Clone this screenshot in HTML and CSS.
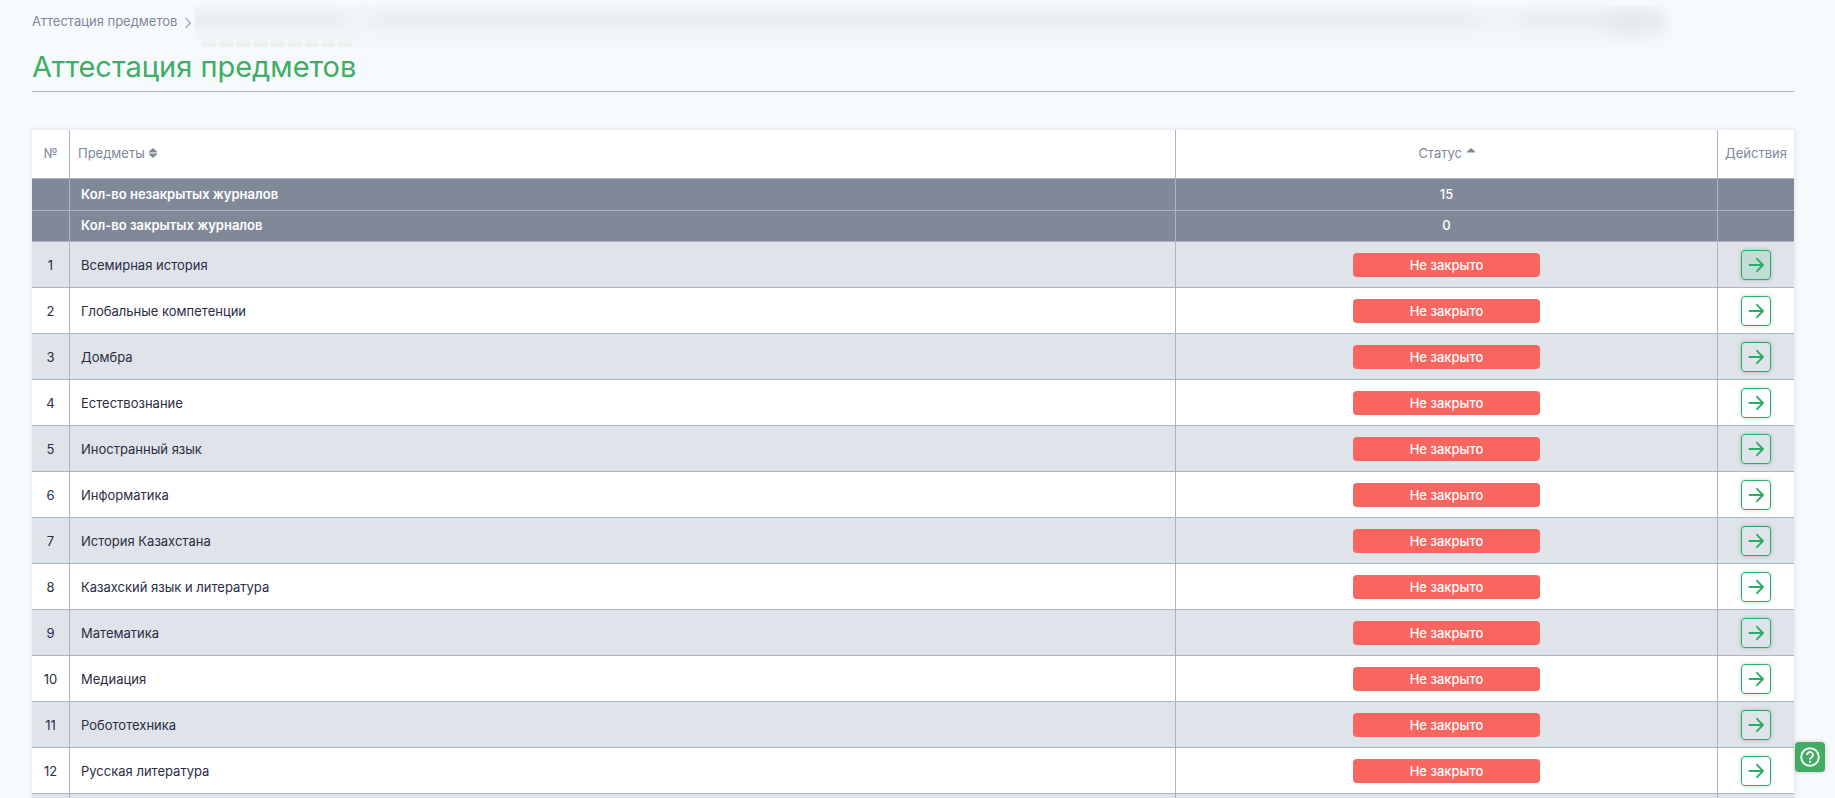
FILE: index.html
```
<!DOCTYPE html>
<html lang="ru">
<head>
    <meta charset="UTF-8">
    <title>Аттестация предметов</title>
    <link rel="stylesheet" href="styles.css">
</head>
<body>

<svg class="sprite" aria-hidden="true">
    <symbol id="arrow" viewBox="0 0 20 20">
        <path d="M3.500 10h13.500M11 3.800l6 6.200-6 6.200" fill="none" stroke="currentColor" stroke-width="1.900" stroke-linecap="round" stroke-linejoin="round"/>
    </symbol>
</svg>

<main class="page">
    <nav class="breadcrumb">
        <a href="#">Аттестация предметов</a>
        <svg class="chevron" viewBox="0 0 6 12"><path d="M.6 1l4.800 5-4.800 5" fill="none" stroke="#9fb3c8" stroke-width="1.400"/></svg>
        <div class="hidden-path"><div class="hidden-title"></div></div>
    </nav>
    <h1 class="title">Аттестация предметов</h1>

    <table class="journal">
        <colgroup>
            <col class="col-num">
            <col>
            <col class="col-status">
            <col class="col-action">
        </colgroup>
        <thead>
        <tr>
            <th>№</th>
            <th class="name">Предметы
                <svg class="sort" viewBox="0 0 8 10"><path d="M4 0l4 3.500v.9H0v-.9zM4 10l4-3.500v-.9H0v.9z" fill="currentColor"/></svg>
            </th>
            <th>Статус
                <svg class="sort" viewBox="0 0 8 10"><path d="M4 0l4 3.500v.9H0v-.9z" fill="currentColor"/></svg>
            </th>
            <th>Действия</th>
        </tr>
        </thead>
        <tbody class="totals">
        <tr><td></td><td class="name">Кол-во незакрытых журналов</td><td>15</td><td></td></tr>
        <tr><td></td><td class="name">Кол-во закрытых журналов</td><td>0</td><td></td></tr>
        </tbody>
        <tbody id="rows" class="rows"></tbody>
    </table>
</main>

<button class="help" type="button" aria-label="Помощь">
    <svg viewBox="0 0 20 20" fill="none" stroke="#fff" stroke-width="1.900">
        <circle cx="10" cy="10" r="8.800"/>
        <path d="M7.100 8a2.900 2.900 0 1 1 4.600 2.200c-1.100.7-1.700 1.100-1.700 2.300"/>
        <path d="M10 13.800v2"/>
    </svg>
</button>

<script src="script.js"></script>
</body>
</html>
```
FILE: styles.css
```
* {
    box-sizing: border-box;
}

body {
    margin: 0;
    background: #f7fafd;
    color: #2a2d43;
    font-family: Inter, "Noto Sans", sans-serif;
    font-size: 13px;
    line-height: 20px;
}

.sprite {
    display: none;
}

.page {
    height: 100vh;
    overflow-y: auto;
    scrollbar-width: none;
    padding: 5px 41px 0 32px;
}

.breadcrumb {
    display: flex;
    height: 42px;
    line-height: 32px;
}

.breadcrumb a {
    color: #7f879a;
    text-decoration: none;
    white-space: nowrap;
}

.chevron {
    flex: none;
    width: 6px;
    height: 12px;
    margin: 12px 4px 0 8px;
}

/* размытая часть пути */
.hidden-path {
    flex: none;
    display: flex;
    align-items: flex-end;
    width: 84%;
    background:
        linear-gradient(90deg, transparent 99%, #f7fafd),
        radial-gradient(ellipse 40px 24px at 97% 40%, #e5e8ee, transparent),
        radial-gradient(ellipse 30px 30px at 88% 42%, #f4f7fa, transparent),
        radial-gradient(ellipse 20px 30px at 11% 40%, #f3f6f9, transparent),
        linear-gradient(#f4f7fa, #ebeef1 40%, #f3f6f9 70%, #f6f9fc);
}

.hidden-title {
    width: 152px;
    height: 12px;
    margin-left: 8px;
    background:
        linear-gradient(#f3f6f9, transparent),
        repeating-linear-gradient(90deg, #e8f2ee 0 13px, #f5f9fb 13px 17px);
}

.title {
    margin: 0 0 38px;
    height: 45px;
    border-bottom: 1px solid #abb3c3;
    color: #41ad62;
    font-size: 29px;
    font-weight: 400;
    line-height: 40px;
}

.journal {
    width: 100%;
    table-layout: fixed;
    border-spacing: 0;
    background: #fff;
    box-shadow: 0 0 6px rgba(100, 130, 150, .2);
    text-align: center;
}

.col-num {
    width: 38px;
}

.col-status {
    width: 542px;
}

.col-action {
    width: 76px;
}

.journal th,
.journal td {
    padding: 0;
    border-right: 1px solid #abb3c3;
    border-bottom: 1px solid #abb3c3;
}

.journal th:last-child,
.journal td:last-child {
    border-right: 0;
}

.journal th {
    height: 49px;
    padding-bottom: 2px;
    color: #7f879a;
    font-weight: 400;
}

.journal th.name {
    padding-left: 8px;
    text-align: left;
}

.journal td.name {
    padding-left: 11px;
    text-align: left;
}

.sort {
    width: 8px;
    height: 10px;
    margin-left: 1px;
}

.totals td {
    height: 32px;
    padding-bottom: 2px;
    background: #818999;
    color: #fff;
    font-weight: 500;
}

.totals tr:last-child td {
    height: 31px;
}

.totals td.name {
    font-weight: 600;
}

.rows td {
    height: 46px;
}

.rows tr:nth-child(odd) {
    background: #dfe3ea;
}

.badge {
    display: block;
    width: 187px;
    margin: 0 auto;
    border-radius: 4px;
    background: #f8665f;
    color: #fff;
    font-weight: 500;
    line-height: 24px;
}

.open {
    display: block;
    width: 30px;
    height: 30px;
    margin: 0 auto;
    padding: 4px;
    border: 1px solid #2bac63;
    border-radius: 4px;
    background: transparent;
    box-shadow: 0 0 4px rgba(0, 0, 0, .2);
    color: #2bac63;
}

.open svg {
    display: block;
    width: 20px;
    height: 20px;
}

.open.active {
    background: #c3dcd5;
}

.help {
    position: fixed;
    right: 10px;
    bottom: 26px;
    width: 30px;
    height: 30px;
    padding: 5px;
    border: 0;
    border-radius: 4px;
    background: #41ad62;
    box-shadow: 0 0 4px rgba(0, 0, 0, .2);
}

.help svg {
    display: block;
    width: 20px;
    height: 20px;
}
```
FILE: script.js
```
var subjects = [
    "Всемирная история", "Глобальные компетенции", "Домбра", "Естествознание",
    "Иностранный язык", "Информатика", "История Казахстана",
    "Казахский язык и литература", "Математика", "Медиация",
    "Робототехника", "Русская литература"
];

var html = "";
for (var i = 0; i < subjects.length; i++) {
    html += '<tr><td>' + (i + 1) + '</td><td class="name">' + subjects[i] + '</td>' +
        '<td><span class="badge">Не закрыто</span></td>' +
        '<td><button type="button" class="open' + (i === 0 ? ' active' : '') + '" aria-label="Открыть">' +
        '<svg><use href="#arrow"></use></svg></button></td></tr>';
}
// пустая строка в конце списка
html += '<tr><td></td><td></td><td></td><td></td></tr>';
document.getElementById("rows").innerHTML = html;
```
